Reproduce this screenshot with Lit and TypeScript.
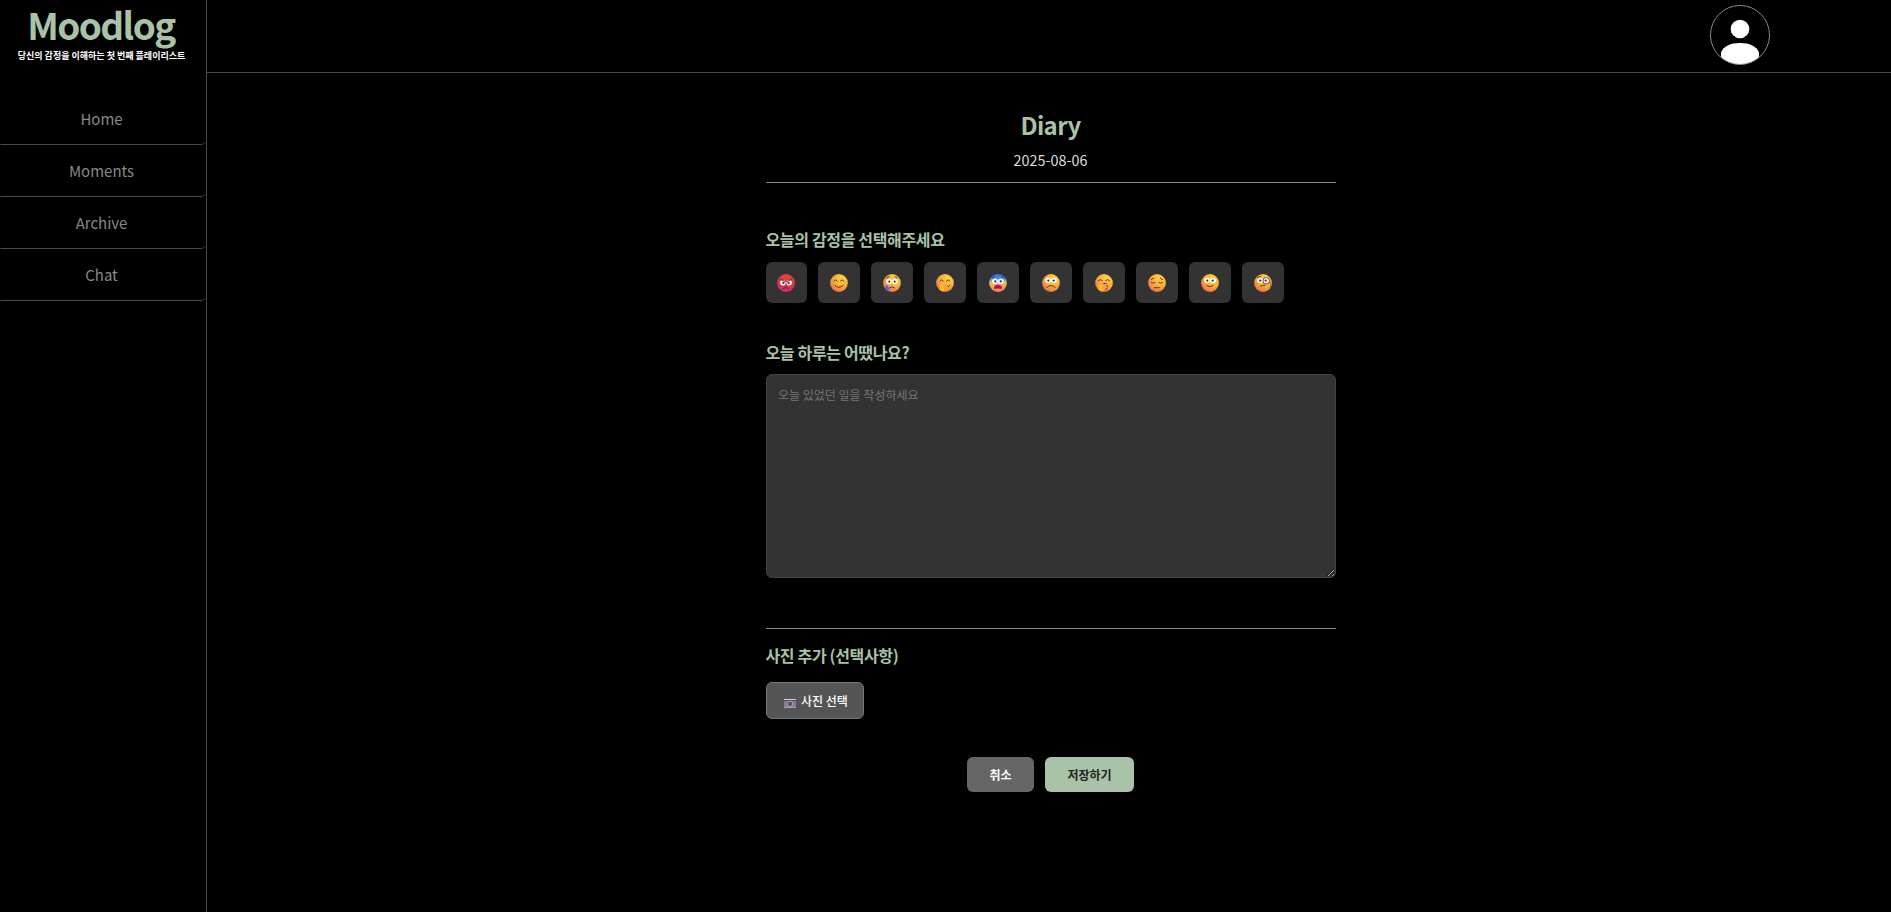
import { LitElement, html, svg, css } from "lit";
import { customElement } from "lit/decorators.js";

const MENU = ["Home", "Moments", "Archive", "Chat"];

const eyesWide = svg`<circle cx="6" cy="6.5" r="2.8" fill="#fff"/><circle cx="12" cy="6.5" r="2.8" fill="#fff"/><circle cx="6.3" cy="6.6" r="1.15" fill="#402a32"/><circle cx="11.7" cy="6.6" r="1.15" fill="#402a32"/>`;
const eyesSmile = svg`<path d="M3.9 7q1.7-2.5 3.4 0M10.5 7q1.7-2.5 3.4 0" class="ln"/>`;
const hand = svg`<path d="M3 11.5 7 10l1-1 1 1.4 2.6-.8.7 1-1.6 1.5 1.5.5-.7 1.6-1.7 1.6-3 1.6-2.5-1z" fill="#ffb82e"/><path d="m7 12 3-1.2M7.5 13.5l3-1.1M8 15l2.3-1" stroke="#dc8132" stroke-width=".55" fill="none"/>`;

const MOODS = [
  { label: "분노", face: "url(#red)", art: svg`<circle cx="5.900" cy="8.700" r="2.700" fill="#fff"/><circle cx="12.100" cy="8.700" r="2.700" fill="#fff"/><circle cx="6.400" cy="8.900" r="1.150" fill="#402a32"/><circle cx="11.600" cy="8.900" r="1.150" fill="#402a32"/><path d="M3.200 5.200 7.900 7.500M14.800 5.200l-4.700 2.300M6 14.600q3-2.600 6 0" class="ln"/>` },
  { label: "기쁨", face: "url(#yellow)", art: svg`${eyesSmile}<path d="M5 11.500q4 3.800 8 0" class="ln"/>` },
  { label: "슬픔", face: "url(#yellow)", art: svg`<g transform="translate(0 1)">${eyesWide}</g><path d="M3.600 4 6 2.800M14.400 4 12 2.800M6.400 13.900q2.600-2.400 5.200 0" class="ln"/><path d="M4.100 10.800q-3 4-1 5.600 2.200 1.100 3-.9.200-1.700-2-4.700z" fill="#3f68e8"/>` },
  { label: "부끄러움", face: "url(#yellow)", art: svg`${eyesSmile}${hand}<path d="M12 12.700q1.300-.2 1.700-1.200" class="ln"/>` },
  { label: "두려움", face: "url(#fear)", art: svg`<g transform="translate(0 .8)">${eyesWide}</g><path d="M3.400 4 5.800 2.600M14.600 4 12.200 2.600" class="ln"/><path d="M5 15q-.3-4.200 4-4.300 4.300.100 4 4.300-4-1.100-8 0z" fill="#bd0876"/>` },
  { label: "걱정", face: "url(#yellow)", art: svg`${eyesWide}<path d="M4.800 13.300q4.200-3.500 8.400 0" class="ln"/>` },
  { label: "지루함", face: "url(#yellow)", art: svg`<path d="M3.500 6.500q1.900-2 3.800 0M10.700 6.500q1.900-2 3.800 0" class="ln"/><ellipse cx="9.400" cy="12.500" rx="3.300" ry="3.700" fill="#a71285"/>${hand}` },
  { label: "우울", face: "url(#yellow)", art: svg`<path d="M3.400 5.500 5.600 4.200M14.600 5.500l-2.200-1.300M3.500 8.500q1.900 1.500 3.700 0M10.800 8.500q1.900 1.500 3.700 0M6.500 13.700h5" class="ln"/>` },
  { label: "평온", face: "url(#yellow)", art: svg`${eyesWide}<path d="M6 11.700q3 2.300 6 0" class="ln"/>` },
  { label: "궁금함", face: "url(#yellow)", art: svg`${eyesWide}<circle cx="12.300" cy="6.800" r="3.300" fill="none" stroke="#74464e" stroke-width=".9"/><path d="M15.600 7q2 2 .7 8" fill="none" stroke="#74464e" stroke-width=".7"/><path d="M3.400 3.500 6.500 2.500M6.500 12.300q2-1.800 4.300-.8" class="ln"/>` },
];

@customElement("mood-face")
class MoodFace extends LitElement {
  static properties = { mood: { attribute: false } };
  declare mood: (typeof MOODS)[number];
  static styles = css`
    :host { display: block; width: 18px; height: 18px; }
    svg { display: block; }
    .ln { fill: none; stroke: #5c3434; stroke-width: 1; stroke-linecap: round; }
  `;
  render() {
    return html`<svg width="18" height="18" viewBox="0 0 18 18" aria-hidden="true">
      <defs>
        <radialGradient id="yellow" cx=".68" cy=".25" r=".85">
          <stop offset="0" stop-color="#ffd34a"/><stop offset=".55" stop-color="#fbab35"/><stop offset="1" stop-color="#e66b55"/>
        </radialGradient>
        <linearGradient id="red" x1=".7" y1="0" x2=".3" y2="1">
          <stop offset="0" stop-color="#e6453c"/><stop offset=".5" stop-color="#dc3545"/><stop offset="1" stop-color="#d12b68"/>
        </linearGradient>
        <linearGradient id="fear" x1="0" y1="0" x2="0" y2="1">
          <stop offset="0" stop-color="#2476e8"/><stop offset=".25" stop-color="#3f8fe8"/><stop offset=".5" stop-color="#f5bd4c"/><stop offset="1" stop-color="#ef8742"/>
        </linearGradient>
      </defs>
      <circle cx="9" cy="9" r="8.900" fill=${this.mood.face}/>
      ${this.mood.art}
    </svg>`;
  }
}

@customElement("app-root")
class AppRoot extends LitElement {
  static styles = css`
    :host {
      display: grid;
      grid-template-columns: 207px 1fr;
      height: 100vh;
      overflow: hidden;
      background: #000;
      color: #fff;
      font-family: "Noto Sans CJK KR", "Noto Sans", sans-serif;
    }
    * { box-sizing: border-box; }
    h1, h2, p { margin: 0; }
    .side { border-right: 1px solid #4a4a4a; text-align: center; }
    .brand { height: 93px; }
    .logo { padding-right: 4px; font-size: 37px; line-height: 49px; font-weight: 700; letter-spacing: -1.600px; color: #a8c3a8; }
    .slogan { margin-top: 1px; padding-right: 3px; font-size: 9px; line-height: 12px; font-weight: 700; white-space: nowrap; }
    .item { display: block; height: 52px; margin-left: -3px; border-bottom: 1px solid #4a4a4a; border-radius: 5px; font-size: 15px; line-height: 52px; color: #888; text-decoration: none; }
    .main { display: flex; flex-direction: column; }
    .top { display: flex; justify-content: flex-end; height: 73px; padding: 5px 121px 0 0; border-bottom: 1px solid #4a4a4a; }
    .avatar { display: block; width: 60px; height: 60px; }
    .diary { width: 570px; margin-left: 558.500px; }
    .head { height: 110px; padding-top: 33px; border-bottom: 1px solid #888; text-align: center; }
    .title { font-size: 24px; line-height: 38px; font-weight: 700; letter-spacing: -.6px; color: #a8c3a8; }
    .date { margin-top: 4px; font-size: 14.400px; line-height: 24px; color: #ddd; }
    .label { font-size: 16px; line-height: 24px; font-weight: 700; color: #a8c3a8; letter-spacing: -.35px; }
    .feel { margin-top: 44px; }
    .moods { display: flex; gap: 11px; margin-top: 11px; }
    .mood { display: grid; place-items: center; width: 41.950px; height: 41px; padding: 1px 0 0; border: 0; border-radius: 6px; background: #333; }
    .write { margin-top: 37px; }
    .text { display: block; width: 570px; height: 204px; margin: 10px 0 0; padding: 10px 11.500px; border: 1px solid #444; border-radius: 6px; background: #333; color: #fff; font: 12px/20px "Noto Sans CJK KR", sans-serif; outline: 0; resize: vertical; }
    .text::placeholder { color: #757575; }
    .photo { margin-top: 50px; padding-top: 14px; border-top: 1px solid #888; }
    .pick { display: flex; align-items: center; gap: 5px; width: 98px; height: 37px; margin-top: 15px; padding: 0 0 0 17.500px; border: 1px solid #777; border-radius: 6px; background: #555; color: #fff; font: 500 12px/18px "Noto Sans CJK KR", sans-serif; }
    .cam { display: block; margin-top: 5px; }
    .actions { display: flex; justify-content: center; gap: 11px; margin-top: 38px; }
    .btn { height: 35px; padding: 0; border: 0; border-radius: 6px; font: 700 12px/35px "Noto Sans CJK KR", sans-serif; }
    .cancel { width: 67px; background: #666; color: #fff; }
    .save { width: 89px; background: #a8c3a8; color: #222; }
  `;

  render() {
    return html`
      <aside class="side">
        <div class="brand">
          <h1 class="logo">Moodlog</h1>
          <p class="slogan">당신의 감정을 이해하는 첫 번째 플레이리스트</p>
        </div>
        <nav>${MENU.map((m) => html`<a class="item" href="#">${m}</a>`)}</nav>
      </aside>
      <div class="main">
        <header class="top">
          <svg class="avatar" viewBox="0 0 60 60" aria-hidden="true">
            <defs><clipPath id="ring"><circle cx="30" cy="30" r="29.500"/></clipPath></defs>
            <circle cx="30" cy="24" r="9.300" fill="#fff"/>
            <path d="M11 60V47.500Q15 38 30 38t19 9.500V60z" fill="#fff" clip-path="url(#ring)"/>
            <circle cx="30" cy="30" r="29.500" fill="none" stroke="#888"/>
          </svg>
        </header>
        <main class="diary">
          <div class="head">
            <h2 class="title">Diary</h2>
            <p class="date">2025-08-06</p>
          </div>
          <section class="feel">
            <div class="label">오늘의 감정을 선택해주세요</div>
            <div class="moods">
              ${MOODS.map((m) => html`<button class="mood" aria-label=${m.label}><mood-face .mood=${m}></mood-face></button>`)}
            </div>
          </section>
          <section class="write">
            <div class="label">오늘 하루는 어땠나요?</div>
            <textarea class="text" placeholder="오늘 있었던 일을 작성하세요"></textarea>
          </section>
          <section class="photo">
            <div class="label">사진 추가 (선택사항)</div>
            <button class="pick">
              <svg class="cam" width="12" height="9" viewBox="0 0 12 9" aria-hidden="true">
                <path d="M0 0h12v9H0z" fill="#85798f"/><path d="M0 0h12v1H0z" fill="#d6cfdf"/><path d="M0 1h12v1H0z" fill="#51475a"/>
                <path d="M0 8h12v1H0z" fill="#aaa0b5"/><circle cx="6" cy="4.800" r="3" fill="#b3a9bf"/><circle cx="6" cy="4.800" r="2.100" fill="#49354f"/><circle cx="6" cy="4.800" r=".8" fill="#9e82aa"/>
              </svg>
              사진 선택
            </button>
          </section>
          <div class="actions">
            <button class="btn cancel">취소</button>
            <button class="btn save">저장하기</button>
          </div>
        </main>
      </div>
    `;
  }
}
